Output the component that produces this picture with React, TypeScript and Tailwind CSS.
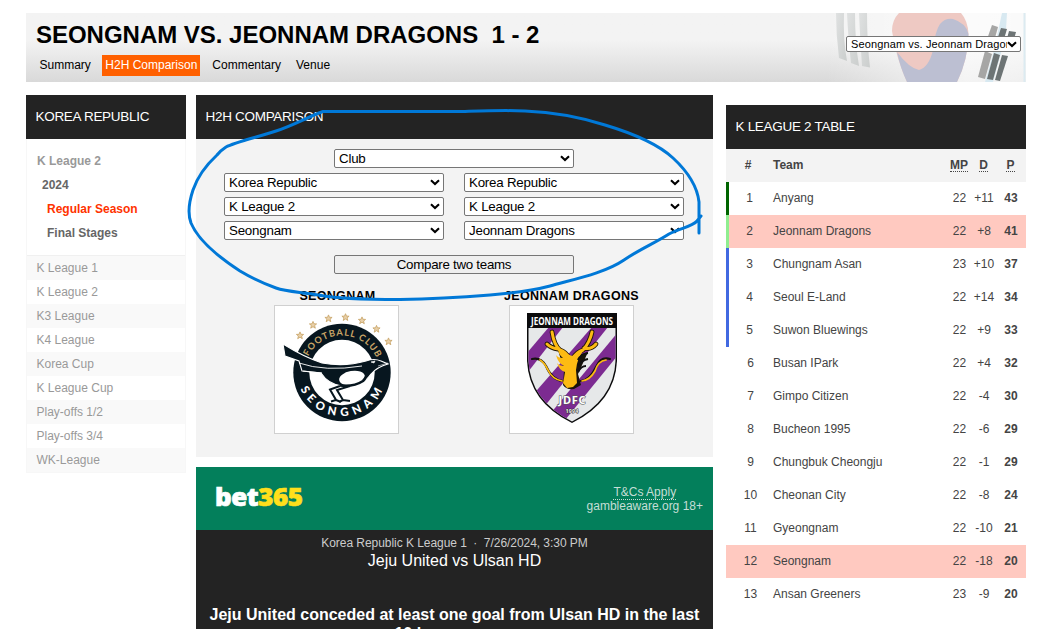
import React from "react";

type Row = { pos: number; team: string; mp: number; d: string; p: number; bar?: string; hl?: boolean };

const table: Row[] = [
  { pos: 1, team: "Anyang", mp: 22, d: "+11", p: 43, bar: "border-[#006400]" },
  { pos: 2, team: "Jeonnam Dragons", mp: 22, d: "+8", p: 41, bar: "border-[#90ee90]", hl: true },
  { pos: 3, team: "Chungnam Asan", mp: 23, d: "+10", p: 37, bar: "border-[#4169e1]" },
  { pos: 4, team: "Seoul E-Land", mp: 22, d: "+14", p: 34, bar: "border-[#4169e1]" },
  { pos: 5, team: "Suwon Bluewings", mp: 22, d: "+9", p: 33, bar: "border-[#4169e1]" },
  { pos: 6, team: "Busan IPark", mp: 22, d: "+4", p: 32 },
  { pos: 7, team: "Gimpo Citizen", mp: 22, d: "-4", p: 30 },
  { pos: 8, team: "Bucheon 1995", mp: 22, d: "-6", p: 29 },
  { pos: 9, team: "Chungbuk Cheongju", mp: 22, d: "-1", p: 29 },
  { pos: 10, team: "Cheonan City", mp: 22, d: "-8", p: 24 },
  { pos: 11, team: "Gyeongnam", mp: 22, d: "-10", p: 21 },
  { pos: 12, team: "Seongnam", mp: 22, d: "-18", p: 20, hl: true },
  { pos: 13, team: "Ansan Greeners", mp: 23, d: "-9", p: 20 },
];

const leagues = ["K League 1", "K League 2", "K3 League", "K4 League", "Korea Cup", "K League Cup", "Play-offs 1/2", "Play-offs 3/4", "WK-League"];

function Chevron() {
  return (
    <svg className="block shrink-0" width="10" height="7" viewBox="0 0 10 7">
      <path d="M1 1.2 L5 5 L9 1.2" fill="none" stroke="#000" strokeWidth="2.1" />
    </svg>
  );
}

function Select({ label, className }: { label: string; className: string }) {
  return (
    <div className={"flex h-[19px] items-center overflow-hidden rounded-[2px] border border-[#767676] bg-white pl-1 pr-[3px] text-black " + className}>
      <span className="min-w-0 flex-1 overflow-hidden whitespace-nowrap">{label}</span>
      <Chevron />
    </div>
  );
}

function Flag() {
  return (
    <svg className="block" width="200" height="69" viewBox="826 13 200 69">
      <defs>
        <linearGradient id="fade" x1="0" x2="1" y1="0" y2="0">
          <stop offset="0" stopColor="#fff" stopOpacity="0" />
          <stop offset="0.7" stopColor="#fff" stopOpacity="0.7" />
          <stop offset="1" stopColor="#fff" stopOpacity="0.6" />
        </linearGradient>
        <linearGradient id="bars" x1="0" x2="1" y1="0" y2="1">
          <stop offset="0" stopColor="#dfe1e1" />
          <stop offset="1" stopColor="#cbcecd" />
        </linearGradient>
      </defs>
      <rect x="826" y="13" width="200" height="69" fill="url(#fade)" />
      <g fill="url(#bars)">
        <path d="M836 13 H844 Q843 40 847 61 L839 58 Q836 35 836 13Z" />
        <path d="M847 13 H855 Q855 42 859 66 L851 63 Q848 36 847 13Z" />
        <path d="M859 13 H867 Q867 42 870 67.500 L862 66 Q860 36 859 13Z" />
      </g>
      <path d="M899 13 H961 Q968 21 968.500 34 Q968 60 957 82 H907 Q896 58 892 31 Q892 20 899 13Z" fill="#eec9c3" />
      <path d="M897 52 Q909 68 919 70 Q929 67 933 50 Q935 31 940 24 Q945 18 953 19 Q966 23 968.500 34 Q968 60 957 82 H907 Q900 67 897 52Z" fill="#bcbfd2" />
      <path d="M1002 13 H1007 L1006 30 L1001 53 L993 82 H985 L994 50Z" fill="#d8e9f1" />
      <path d="M1024.500 13 V82" stroke="#dcebf1" strokeWidth="2" />
      <g fill="#a6a6a5">
        <path d="M992 25 L998 27 L993 45 L986 42Z" />
        <path d="M985 51 L992 54 L985 79 L978 77Z" />
      </g>
      <g fill="#6d7475">
        <path d="M1001 28 L1007 29 L1001 49 L995 46Z" />
        <path d="M994 53 L1000 55 L993 80 L987 79Z" />
        <path d="M1009 31 L1016 32 L1011 50 L1004 50Z" />
        <path d="M1002 55 L1008 56 L1000 81 L995 80Z" />
      </g>
    </svg>
  );
}

const starPath = "M0 -3.600 L1 -1.200 L3.600 -1.100 L1.600 .6 L2.300 3.200 L0 1.700 L-2.300 3.200 L-1.600 .6 L-3.600 -1.100 L-1 -1.200Z";
const stars = [[300, 335.500], [313, 325], [328.500, 318.500], [345.500, 317.300], [362, 320.500], [376.500, 329], [388.500, 341.500]];

function SeongnamCrest() {
  return (
    <svg className="block" width="123" height="127" viewBox="275 306 123 127">
      <defs>
        <path id="arcTop" d="M304.500 373 A37.500 37.500 0 0 1 379.500 373" />
        <path id="arcBottom" d="M297 371 A45 45 0 0 0 387 371" />
      </defs>
      {stars.map(([x, y], i) => (
        <path key={i} d={starPath} transform={`translate(${x} ${y})`} fill="#e8cfa7" stroke="#c7a264" strokeWidth=".8" />
      ))}
      <circle cx="342" cy="372.500" r="48.700" fill="#07161f" />
      <circle cx="342" cy="372.500" r="32.700" fill="#fff" />
      <text fontFamily="Lato, sans-serif" fontSize="9.200" fontWeight="700" fill="#c9a566" textAnchor="middle" letterSpacing="1">
        <textPath href="#arcTop" startOffset="51%">FOOTBALL CLUB</textPath>
      </text>
      <text fontFamily="Lato, sans-serif" fontSize="11.500" fontWeight="900" fill="#fff" textAnchor="middle" letterSpacing="5">
        <textPath href="#arcBottom" startOffset="51%">SEONGNAM</textPath>
      </text>
      <path d="M283 344 L285 356 L299 361 L302 371 L321 373 Q328 384 342 386 L354 385 Q366 382 371 374 Q377 367 388 364 L381 361 Q374 358 366 361 Q345 367 322 363 Q304 357 283 344Z" fill="#07161f" stroke="#fff" strokeWidth="1.100" />
      <path d="M299 363 Q325 372 362 366 M303 371 L322 373" fill="none" stroke="#fff" strokeWidth=".9" />
      <ellipse cx="352" cy="378" rx="13" ry="7" fill="#fff" transform="rotate(-10 352 378)" />
      <path d="M340 385.500 Q354 387 363 381 Q367 377 368 370" fill="none" stroke="#07161f" strokeWidth="2.600" />
      <path d="M340 386 L330 389.500 L336 400 L331 401.500 M336 400 L341 402 M350 386 L337 390 L343 400 L339 402 M343 400 L350 401" fill="none" stroke="#07161f" strokeWidth="2" />
      <path d="M371 362 L375 361 L374 363Z M378 366 L388 363" fill="#fff" stroke="#fff" strokeWidth=".6" />
    </svg>
  );
}

function JeonnamCrest() {
  return (
    <svg className="block" width="123" height="127" viewBox="509 306 123 127">
      <defs>
        <clipPath id="shield">
          <path d="M527.500 328 H614.500 V361 Q613 400 571 421.500 Q529 400 527.500 361Z" />
        </clipPath>
      </defs>
      <path d="M526 313 H616 V361 Q614 402 571 423 Q528 402 526 361Z" fill="#0b0b0c" />
      <g clipPath="url(#shield)">
        <path d="M520 320 H622 V430 H520Z" fill="#e6e8e9" />
        <g fill="#7c2b91">
          <path d="M548 327 H562 L520 381 V360Z" />
          <path d="M591 327 H607 L543 407 L530 397Z" />
          <path d="M622 326 V349 L560 425 L549 414Z" />
        </g>
      </g>
      <text x="571" y="325" textAnchor="middle" textLength="82" lengthAdjust="spacingAndGlyphs" fontFamily="Noto Sans, sans-serif" fontWeight="700" fontSize="10.800" fill="#fff">JEONNAM DRAGONS</text>
      <g fill="none" stroke="#211607" strokeLinecap="round" strokeWidth="4.800">
        <path d="M568 358 Q565 352 559 350 Q553 345 551 332 M557 349 Q550 348 546 344 M572 358 Q576 352 582 350 Q589 342 591 332 M583 348 Q590 350 595 344" />
      </g>
      <g fill="none" stroke="#151110" strokeLinecap="round" strokeWidth="2.200">
        <path d="M531 359 Q540 357 545 366 Q551 380 562 381 M609 359 Q600 356 595 367 Q589 380 580 381" />
      </g>
      <path d="M557 350 L563 370 L562 385 Q565 390 573 389 L580 385 L577 374 L587 352 L571 357Z" fill="#19130b" />
      <path d="M557 349 Q557 354 562 358 Q557 358 555 355 Q557 363 563 366 Q558 366 556 363 Q558 370 564 372 L563 378 L562 383 L566 388 L572 387 L576 383 L575 370 Q576 358 583 350 Q576 352 571 356 Q564 353 557 349Z" fill="#fdbb13" />
      <g fill="none" stroke="#fdbb13" strokeLinecap="round" strokeWidth="3">
        <path d="M568 358 Q565 352 559 350 Q553 345 551 332 M557 349 Q550 348 546 344 M572 358 Q576 352 582 350 Q589 342 591 332 M583 348 Q590 350 595 344" />
        <path strokeWidth="1.700" d="M539 360 Q543 362 547 370 Q551 379 561 381 M605 360 Q597 361 594 371 Q589 380 581 381" />
      </g>
      <path d="M587 353 Q580 354 577 360 M587 359 Q581 360 577 366 M585 366 Q580 366 577 372" stroke="#111" strokeWidth="2.200" fill="none" />
      <text x="571" y="404" textAnchor="middle" textLength="27" fontFamily="Noto Sans, sans-serif" fontWeight="700" fontSize="11" fill="#fff" stroke="#555" strokeWidth="1" paintOrder="stroke">JDFC</text>
      <text x="571" y="413" textAnchor="middle" textLength="13" fontFamily="Noto Sans, sans-serif" fontWeight="700" fontSize="5.500" fill="#eee" stroke="#333" strokeWidth=".9" paintOrder="stroke">1994</text>
    </svg>
  );
}

function PanelTitle({ children }: { children: React.ReactNode }) {
  return <h2 className="h-11 bg-[#232323] pl-[9.5px] text-[13.5px] leading-[43px] tracking-[-0.3px] text-white">{children}</h2>;
}

export default function App() {
  return (
    <div className="relative h-[629px] w-[1050px] overflow-hidden bg-white pl-[26px] pr-6 pt-[13px] font-['Liberation_Sans',Arial,sans-serif] text-[12px] text-[#444]">
      <header className="relative flex h-[69px] w-[1000px] justify-between bg-linear-to-b from-[#f3f3f3] from-40% to-[#d9d9d9]">
        <div className="pl-[10px] pt-2">
          <h1 className="h-7 whitespace-pre text-[24px] leading-7 font-bold tracking-[-0.02px] text-black">SEONGNAM VS. JEONNAM DRAGONS  1 - 2</h1>
          <nav className="mt-[6px] flex h-[21px] items-center gap-[6px] text-black">
            <a className="flex h-full items-center pr-[2.5px] pl-[3.5px] pb-[2px]">Summary</a>
            <a className="ml-[3px] flex h-full w-[98px] items-center bg-[#ff6000] px-[3px] pb-[2px] whitespace-nowrap text-white">H2H Comparison</a>
            <a className="ml-[3px] flex h-full items-center px-[3px] pb-[2px]">Commentary</a>
            <a className="ml-[3px] flex h-full items-center px-[3px] pb-[2px]">Venue</a>
          </nav>
        </div>
        <Flag />
        <Select label="Seongnam vs. Jeonnam Dragons" className="absolute right-[5px] top-[23px] h-4! w-[175px] text-[11px] tracking-[0.12px]" />
      </header>

      <main className="mt-[13px] flex items-start">
        <aside className="w-[160px]">
          <PanelTitle>KOREA REPUBLIC</PanelTitle>
          <div className="border-x border-b border-[#f7f7f7]">
            <ul className="flex h-[117px] flex-col border-b border-[#f0f0f0] pt-[10px] pl-[10px] font-bold leading-6 text-[#666]">
              <li className="text-[#999]">K League 2</li>
              <li className="pl-[5px]">2024</li>
              <li className="pl-[10px] text-[#ff3300]">Regular Season</li>
              <li className="pl-[10px]">Final Stages</li>
            </ul>
            <ul className="leading-6 text-[#999]">
              {leagues.map((name, i) => (
                <li key={name} className={"h-6 pl-[9.5px] " + (i % 2 === 0 ? "bg-[#f9f9f9]" : "bg-white")}>{name}</li>
              ))}
            </ul>
          </div>
        </aside>

        <div className="ml-[10px] w-[517px]">
          <section className="h-[362px] bg-[#f3f3f3]">
            <PanelTitle>H2H COMPARISON</PanelTitle>
            <div className="flex flex-col items-center pt-[10px] pr-px text-[13.333px] tracking-[-0.22px]">
              <Select label="Club" className="w-[240px]" />
              <div className="mt-[5px] grid grid-cols-[220px_220px] gap-x-5 gap-y-[5px]">
                <Select label="Korea Republic" className="w-full" />
                <Select label="Korea Republic" className="w-full" />
                <Select label="K League 2" className="w-full" />
                <Select label="K League 2" className="w-full" />
                <Select label="Seongnam" className="w-full" />
                <Select label="Jeonnam Dragons" className="w-full" />
              </div>
              <button className="mt-[15px] flex h-[19px] w-[240px] items-center justify-center rounded-[2px] border border-[#767676] bg-[#efefef] tracking-[-0.28px] text-black">Compare two teams</button>
            </div>
            <div className="mt-[14px] grid grid-cols-[235px_235px] justify-center pr-px font-bold text-black">
              <div className="flex flex-col items-center">
                <h3 className="h-[17px] pl-[2px] text-[12.500px] leading-[17px] tracking-[0.3px]">SEONGNAM</h3>
                <div className="border border-[#d0d0d0] bg-white"><SeongnamCrest /></div>
              </div>
              <div className="flex flex-col items-center">
                <h3 className="h-[17px] text-[12.500px] leading-[17px] tracking-[0.35px]">JEONNAM DRAGONS</h3>
                <div className="border border-[#d0d0d0] bg-white"><JeonnamCrest /></div>
              </div>
            </div>
          </section>

          <section className="mt-[10px] h-[180px] bg-[#232323] text-center">
            <div className="flex h-[63px] items-center justify-between bg-[#037f5b] pl-[18.5px] pr-[10px]">
              <div className="origin-left scale-x-[1.08] pb-[3px] font-['Open_Sans',sans-serif] text-[24px] font-extrabold tracking-[-0.4px] text-white [-webkit-text-stroke:0.7px]">bet<span className="text-[#ffdf1b]">365</span></div>
              <div className="leading-[14px] text-[#c5ded6]">
                <div><span className="border-b border-dotted border-[#c5ded6]">T&amp;Cs Apply</span></div>
                <div>gambleaware.org 18+</div>
              </div>
            </div>
            <p className="pt-[5px] leading-4 tracking-[-0.05px] text-[#ccc]">Korea Republic K League 1 &nbsp;·&nbsp; 7/26/2024, 3:30 PM</p>
            <p className="text-[16px] leading-5 text-white">Jeju United vs Ulsan HD</p>
            <p className="mt-[34px] px-3 text-[16px] leading-[19px] font-bold text-white">Jeju United conceded at least one goal from Ulsan HD in the last 10 home games</p>
          </section>
        </div>

        <aside className="ml-[13px] mt-[10px] w-[300px]">
          <PanelTitle>K LEAGUE 2 TABLE</PanelTitle>
          <table className="w-full table-fixed border-collapse">
            <colgroup>
              <col className="w-[47px]" /><col className="w-[171px]" /><col className="w-[27px]" /><col className="w-[25px]" /><col className="w-[30px]" />
            </colgroup>
            <thead>
              <tr className="h-[33px] bg-[#f3f3f3] font-bold">
                <th className="pr-[3px] pb-[2px] text-center">#</th>
                <th className="pb-[2px] text-left">Team</th>
                <th className="pb-[2px] pl-[3px] text-center"><span className="inline-block h-[14px] border-b border-dotted border-[#444] leading-[14px]">MP</span></th>
                <th className="pb-[2px] text-center"><span className="inline-block h-[14px] border-b border-dotted border-[#444] leading-[14px]">D</span></th>
                <th className="pb-[2px] pr-px text-center"><span className="inline-block h-[14px] border-b border-dotted border-[#444] leading-[14px]">P</span></th>
              </tr>
            </thead>
            <tbody>
              {table.map((r) => (
                <tr key={r.pos} className={"h-[33px] " + (r.hl ? "bg-[#ffc9c0]" : "bg-white")}>
                  <td className="p-0">
                    <div className={"flex h-[33px] items-center justify-center pb-[2px] " + (r.bar ? "border-l-3 pr-[3px] " + r.bar : "pl-[2px]")}>{r.pos}</div>
                  </td>
                  <td className="pb-[2px]">{r.team}</td>
                  <td className="pb-[2px] pl-1 text-center">{r.mp}</td>
                  <td className="pb-[2px] pl-px text-center">{r.d}</td>
                  <td className="pb-[2px] text-center font-bold">{r.p}</td>
                </tr>
              ))}
            </tbody>
          </table>
        </aside>
      </main>

      <svg className="pointer-events-none absolute left-0 top-0" width="1050" height="629" viewBox="0 0 1050 629">
        <path
          d="M699 233 V202 C697 184 686 170 673 158 C658 144 635 134 605 125 C580 117 550 112 525 111 C505 110 480 111 465 111.500 H323 C310 116 294 125 276 131 C258 137 235 142 226 147 Q220 151 217 155 C203 168 197 178 193 190 C189 202 188 215 191 223 C198 240 217 256 240 271 C250 277 262 283 276 288 C287 292 302 292 318 295 C333 298 360 299.500 400 299.500 C430 299 465 297 490 295 C515 293 535 290 550 286 C575 279 605 273 624 260 C640 249 655 243 669 234 C680 228 692 227 697 221 L701 216"
          fill="none" stroke="#0078d7" strokeWidth="3" strokeLinejoin="round" strokeLinecap="round"
        />
      </svg>
    </div>
  );
}
